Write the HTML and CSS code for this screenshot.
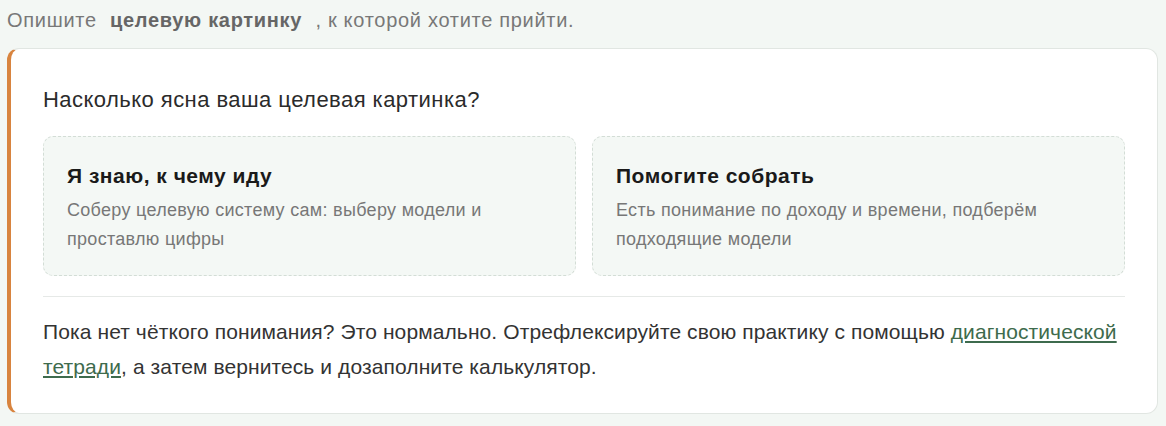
FILE: index.html
```html
<!DOCTYPE html>
<html lang="ru">
<head>
    <meta charset="UTF-8">
    <meta name="viewport" content="width=device-width, initial-scale=1.0">
    <title>Целевая картинка</title>
    <link rel="stylesheet" href="styles.css">
</head>
<body>
    <!-- Подсказка -->
    <p class="hint">Опишите <strong class="hint-accent">целевую картинку</strong> , к которой хотите прийти.</p>

    <!-- Карточка с выбором -->
    <div class="panel">
        <h2 class="panel-title">Насколько ясна ваша целевая картинка?</h2>

        <div class="options">
            <div class="option">
                <div class="option-title">Я знаю, к чему иду</div>
                <div class="option-text">Соберу целевую систему сам: выберу модели и проставлю цифры</div>
            </div>
            <div class="option">
                <div class="option-title">Помогите собрать</div>
                <div class="option-text">Есть понимание по доходу и времени, подберём подходящие модели</div>
            </div>
        </div>

        <p class="note">Пока нет чёткого понимания? Это нормально. Отрефлексируйте свою практику с помощью <a href="#">диагностической тетради</a>, а затем вернитесь и дозаполните калькулятор.</p>
    </div>
</body>
</html>
```

FILE: styles.css
```css
body {
    font-family: "Liberation Sans", Arial, sans-serif;
    margin: 0;
    padding: 0 8px 0 7px;
    background: #f3f7f4;
    color: #333;
}
.hint {
    margin: 0;
    padding: 8px 0 0;
    font-size: 20px;
    letter-spacing: 0.7px;
    line-height: 24px;
    color: #787878;
}
.hint-accent {
    padding: 0 7px;
    color: #666;
}

/* Карточка */
.panel {
    margin-top: 16px;
    background: #fff;
    border: 1px solid #e1e6e2;
    border-left: 4px solid #d8843f;
    border-radius: 12px;
    padding: 36px 32px 29px 32px;
}
.panel-title {
    margin: 0 0 21px;
    font-size: 22px;
    letter-spacing: 0.45px;
    font-weight: normal;
    line-height: 30px;
    color: #2b2b2b;
}

/* Варианты */
.options {
    display: grid;
    grid-template-columns: 1fr 1fr;
    gap: 16px;
    padding-bottom: 20px;
    border-bottom: 1px solid #e6e9e7;
}
.option {
    background: #f4f8f5;
    border: 1.5px dashed #d3ddd6;
    border-radius: 10px;
    padding: 25px 23px 21px;
}
.option-title {
    font-size: 21px;
    letter-spacing: 0.5px;
    font-weight: bold;
    line-height: 28px;
    color: #1a1a1a;
    margin-bottom: 6px;
}
.option-text {
    font-size: 18px;
    letter-spacing: 0.3px;
    line-height: 29px;
    color: #777;
}

.note {
    margin: 17px 0 0;
    font-size: 21px;
    letter-spacing: 0.1px;
    line-height: 35px;
    color: #333;
}
.note a {
    color: #3e6b4d;
    text-decoration: underline;
}
```
